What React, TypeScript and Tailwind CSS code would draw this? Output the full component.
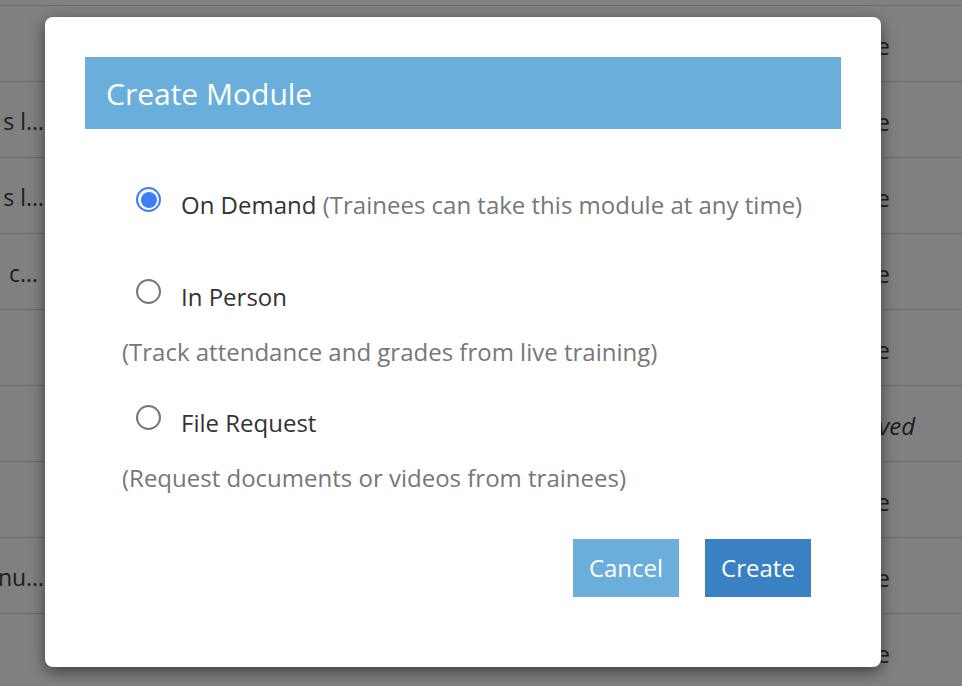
import React, { useState } from "react";

type Row = { left?: string; leftPr?: string; right?: string; italic?: boolean; pr: string };

// filas de la tabla de fondo (solo se ven los bordes)
const rows: Row[] = [
    { pr: "pr-[72px]" },
    { right: "e", pr: "pr-[72px]" },
    { left: "s l…", right: "e", pr: "pr-[72px]" },
    { left: "s l…", right: "e", pr: "pr-[72px]" },
    { left: "c…", leftPr: "pr-[6px]", right: "e", pr: "pr-[72px]" },
    { right: "e", pr: "pr-[72px]" },
    { right: "ved", italic: true, pr: "pr-[47px]" },
    { right: "e", pr: "pr-[72px]" },
    { left: "nu…", right: "e", pr: "pr-[72px]" },
    { right: "e", pr: "pr-[72px]" },
];

const options = [
    {
        id: "demand",
        label: "On Demand",
        hint: "(Trainees can take this module at any time)",
        inline: true,
    },
    {
        id: "person",
        label: "In Person",
        hint: "(Track attendance and grades from live training)",
        inline: false,
    },
    {
        id: "file",
        label: "File Request",
        hint: "(Request documents or videos from trainees)",
        inline: false,
    },
];

const Radio = ({ checked }: { checked: boolean }) =>
    checked ? (
        <span className="flex h-[25px] w-[25px] shrink-0 items-center justify-center rounded-full border-2 border-[#3b7ef5] bg-white">
            <span className="block h-[16px] w-[16px] rounded-full bg-[#3b7ef5]" />
        </span>
    ) : (
        <span className="block h-[25px] w-[25px] shrink-0 rounded-full border-2 border-[#777] bg-white" />
    );

export default function App() {
    const [selected, setSelected] = useState("demand");

    return (
        <div
            className="relative h-[686px] w-[962px] overflow-hidden bg-[#808080] text-[24px] text-[#1c1c1c]"
            style={{ fontFamily: '"Open Sans", "Noto Sans", sans-serif' }}
        >
            {/* TABLA DE FONDO */}
            <div className="-mt-[70px] flex flex-col">
                {rows.map((row, i) => (
                    <div
                        key={i}
                        className="flex h-[76px] items-center border-b border-[#6b6b6b] pt-[4px]"
                    >
                        <div className={`flex w-[44px] justify-end whitespace-nowrap text-[23px] ${row.leftPr ?? ""}`}>
                            {row.left}
                        </div>
                        <div className="flex-1" />
                        <div className={`w-[160px] text-right ${row.pr} ${row.italic ? "italic" : ""}`}>
                            {row.right}
                        </div>
                    </div>
                ))}
            </div>

            {/* MODAL */}
            <div className="absolute left-[45px] top-[17px] flex h-[650px] w-[836px] flex-col rounded-lg bg-white p-[40px] shadow-[0_5px_15px_rgba(0,0,0,0.5)]">
                <div className="flex h-[72px] items-center bg-[#6aafdb] px-[21px] text-[30px] text-white">
                    Create Module
                </div>

                <div className="mt-[61px] flex flex-col pl-[37px] text-[#333]">
                    {options.map((opt, i) => (
                        <div key={opt.id} className={i === 0 ? "" : i === 1 ? "mt-[62px]" : "mt-[41px]"}>
                            <label
                                className="flex cursor-pointer items-start gap-[20px] pl-[14px] leading-[30px]"
                                onClick={() => setSelected(opt.id)}
                            >
                                <span className="-mt-[3px] block">
                                    <Radio checked={selected === opt.id} />
                                </span>
                                <span>
                                    {opt.label}
                                    {opt.inline && (
                                        <span className="text-[#777]"> {opt.hint}</span>
                                    )}
                                </span>
                            </label>
                            {!opt.inline && (
                                <div className="mt-[25px] leading-[30px] text-[#777]">{opt.hint}</div>
                            )}
                        </div>
                    ))}
                </div>

                <div className="mt-auto flex justify-end gap-[26px] pb-[30px] pr-[30px]">
                    <button className="h-[58px] w-[106px] bg-[#6aafdb] text-white">Cancel</button>
                    <button className="h-[58px] w-[106px] bg-[#3a81c4] text-white">Create</button>
                </div>
            </div>
        </div>
    );
}
